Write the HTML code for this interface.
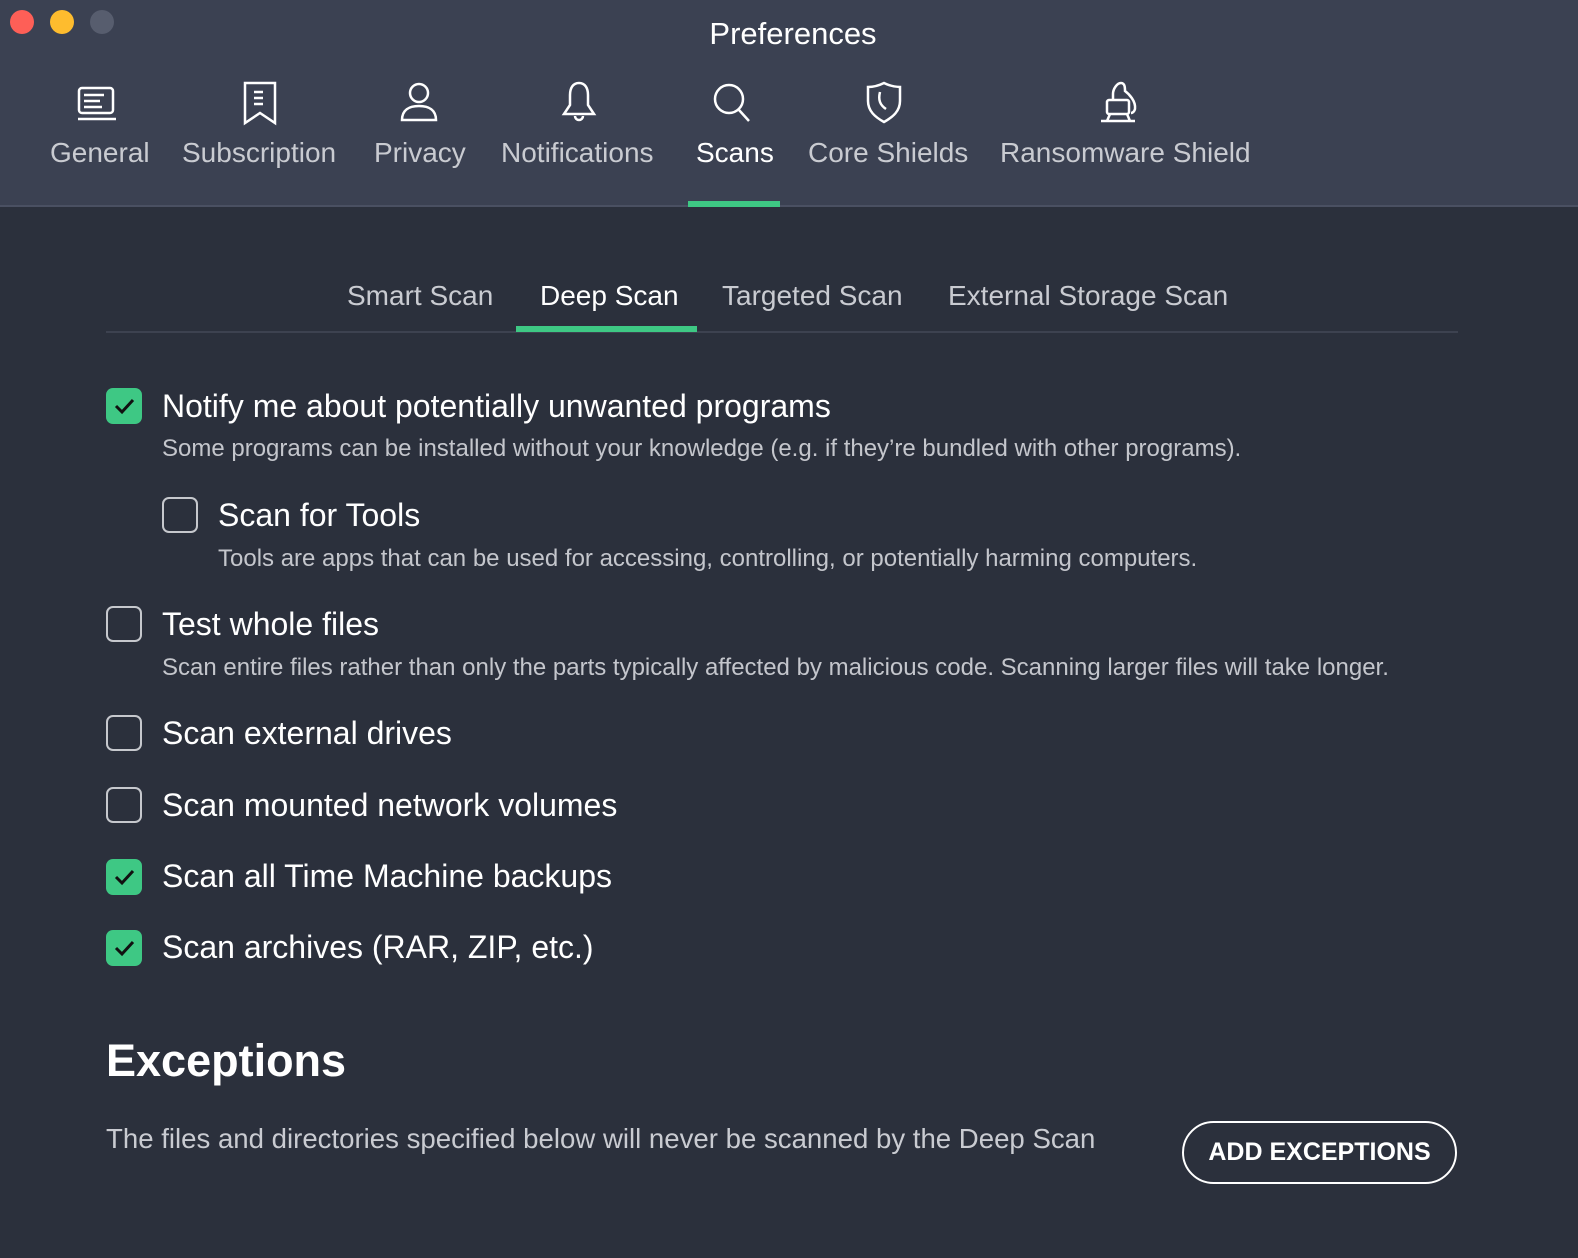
<!DOCTYPE html>
<html><head><meta charset="utf-8"><style>
*{margin:0;padding:0;box-sizing:border-box}
body{width:1578px;height:1258px;background:#2b303c;font-family:"Liberation Sans",sans-serif;position:relative;overflow:hidden;color:#fff}
.hdr{position:absolute;left:0;top:0;width:1578px;height:207px;background:#3b4152;border-bottom:2px solid #4a5062}
.dot{position:absolute;top:10px;width:24px;height:24px;border-radius:50%}
.t{position:absolute;font-size:28px;color:#c9cbd1;white-space:nowrap;text-align:center}
.ic{position:absolute;top:80px}
.abs{position:absolute;white-space:nowrap}
.cb{position:absolute;width:36px;height:36px;border-radius:7px;border:2.5px solid #c6c8cd}
.cb.on{background:#3ec884;border:none}
.lab{font-size:32px;color:#fff}
.desc{font-size:24px;color:#c4c6cc}
</style></head><body>
<div class="hdr">
<div class="dot" style="left:10px;background:#fe5f57"></div>
<div class="dot" style="left:50px;background:#febc2e"></div>
<div class="dot" style="left:90px;background:#575d6e"></div>
<div class="abs" style="left:4px;width:1578px;text-align:center;top:16px;font-size:31px;color:#fff">Preferences</div>

<svg class="ic" style="left:74px" width="46" height="42" viewBox="0 0 46 42" fill="none" stroke="#fff" stroke-width="2.5"><rect x="5" y="8" width="34" height="25" rx="3"/><path d="M10 15h20M10 21h16M10 27h18M4 39h38"/></svg>
<div class="t" style="left:50px;top:137px">General</div>

<svg class="ic" style="left:240px" width="40" height="46" viewBox="0 0 40 46" fill="none" stroke="#fff" stroke-width="2.5"><path d="M5 3h30v40l-15-10-15 10z"/><path d="M14 12h9M14 18h9M14 24h9"/></svg>
<div class="t" style="left:182px;top:137px">Subscription</div>

<svg class="ic" style="left:397px" width="44" height="44" viewBox="0 0 44 44" fill="none" stroke="#fff" stroke-width="2.5"><circle cx="22" cy="13" r="9"/><path d="M5 40c0-10 7-14 17-14s17 4 17 14z"/></svg>
<div class="t" style="left:374px;top:137px">Privacy</div>

<svg class="ic" style="left:557px" width="44" height="46" viewBox="0 0 44 46" fill="none" stroke="#fff" stroke-width="2.5"><path d="M22 3c-6 0-9 5-9 12v10l-6 9h30l-6-9V15c0-7-3-12-9-12z"/><path d="M18 36a4 4 0 0 0 8 0"/></svg>
<div class="t" style="left:501px;top:137px">Notifications</div>

<svg class="ic" style="left:710px" width="46" height="46" viewBox="0 0 46 46" fill="none" stroke="#fff" stroke-width="2.5"><circle cx="19" cy="19" r="14"/><path d="M29 30l10 11"/></svg>
<div class="t" style="left:696px;top:137px;color:#fff">Scans</div>

<svg class="ic" style="left:862px" width="44" height="44" viewBox="0 0 44 44" fill="none" stroke="#fff" stroke-width="2.5"><path d="M22 3c6 3 11 4 16 4v14c0 10-7 16-16 21C13 37 6 31 6 21V7c5 0 10-1 16-4z"/><path d="M18 12c-2 8 0 13 6 17"/></svg>
<div class="t" style="left:808px;top:137px">Core Shields</div>

<svg class="ic" style="left:1097px" width="46" height="46" viewBox="0 0 46 46" fill="none" stroke="#fff" stroke-width="2.5"><path d="M16 20v-6c0-5 4-11 8-11s4 5 4 8c4 3 11 10 10 18-1 4-4 4-4 4"/><rect x="10" y="20" width="22" height="14" rx="2"/><path d="M4 41h34M13 34l-3 7M30 34l3 7"/></svg>
<div class="t" style="left:1000px;top:137px">Ransomware Shield</div>

<div class="abs" style="left:688px;top:201px;width:92px;height:6px;background:#3ec884"></div>
</div>

<div class="abs" style="left:106px;top:331px;width:1352px;height:2px;background:#3d4250"></div>
<div class="abs" style="left:347px;top:280px;font-size:28px;color:#c9cbd1">Smart Scan</div>
<div class="abs" style="left:540px;top:280px;font-size:28px;color:#fff">Deep Scan</div>
<div class="abs" style="left:516px;top:326px;width:181px;height:6px;background:#3ec884"></div>
<div class="abs" style="left:722px;top:280px;font-size:28px;color:#c9cbd1">Targeted Scan</div>
<div class="abs" style="left:948px;top:280px;font-size:28px;color:#c9cbd1">External Storage Scan</div>

<svg width="0" height="0" style="position:absolute"><symbol id="ck" viewBox="0 0 36 36"><path d="M10 18l6 6 11-12" fill="none" stroke="#111" stroke-width="3"/></symbol></svg>

<div class="cb on" style="left:106px;top:388px"><svg width="36" height="36"><use href="#ck"/></svg></div>
<div class="abs lab" style="left:162px;top:388px">Notify me about potentially unwanted programs</div>
<div class="abs desc" style="left:162px;top:435px">Some programs can be installed without your knowledge (e.g. if they’re bundled with other programs).</div>

<div class="cb" style="left:162px;top:497px"></div>
<div class="abs lab" style="left:218px;top:497px">Scan for Tools</div>
<div class="abs desc" style="left:218px;top:545px">Tools are apps that can be used for accessing, controlling, or potentially harming computers.</div>

<div class="cb" style="left:106px;top:606px"></div>
<div class="abs lab" style="left:162px;top:606px">Test whole files</div>
<div class="abs desc" style="left:162px;top:654px">Scan entire files rather than only the parts typically affected by malicious code. Scanning larger files will take longer.</div>

<div class="cb" style="left:106px;top:715px"></div>
<div class="abs lab" style="left:162px;top:715px">Scan external drives</div>

<div class="cb" style="left:106px;top:787px"></div>
<div class="abs lab" style="left:162px;top:787px">Scan mounted network volumes</div>

<div class="cb on" style="left:106px;top:859px"><svg width="36" height="36"><use href="#ck"/></svg></div>
<div class="abs lab" style="left:162px;top:858px">Scan all Time Machine backups</div>

<div class="cb on" style="left:106px;top:930px"><svg width="36" height="36"><use href="#ck"/></svg></div>
<div class="abs lab" style="left:162px;top:929px">Scan archives (RAR, ZIP, etc.)</div>

<div class="abs" style="left:106px;top:1035px;font-size:45px;font-weight:bold">Exceptions</div>
<div class="abs" style="left:106px;top:1123px;font-size:27.6px;color:#c9cbd1">The files and directories specified below will never be scanned by the Deep Scan</div>
<div class="abs" style="left:1182px;top:1121px;width:275px;height:63px;border:2px solid #fff;border-radius:32px;text-align:center;line-height:59px;font-size:25px;font-weight:bold">ADD EXCEPTIONS</div>
</body></html>
